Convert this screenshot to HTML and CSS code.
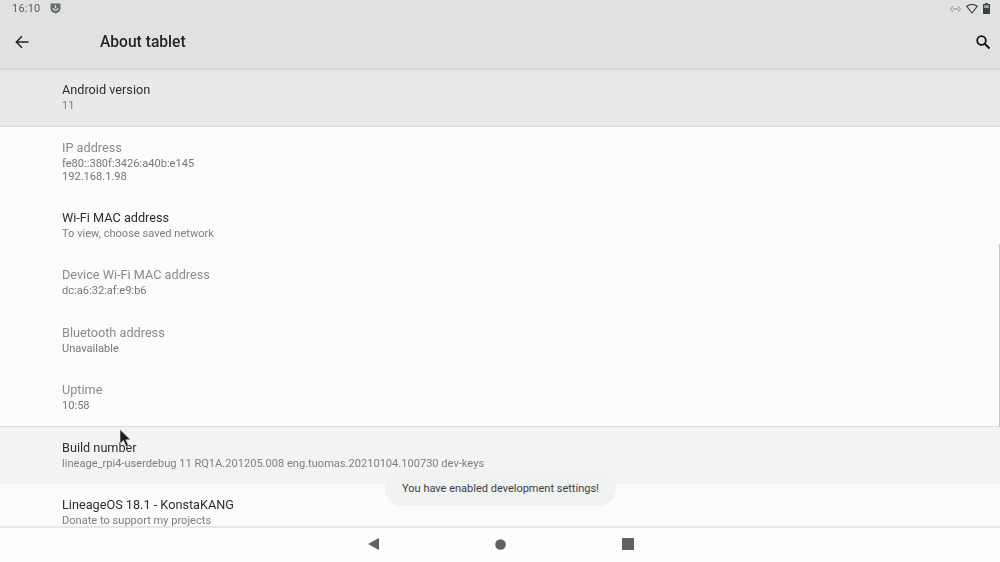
FILE: index.html
```html
<!DOCTYPE html>
<html lang="en">
  <head>
    <meta charset="UTF-8" />
    <meta name="viewport" content="width=device-width, initial-scale=1" />
    <title>About tablet</title>
    <link rel="stylesheet" href="styles.css">
  </head>
  <body>
    <div class="screen">
      <header class="top">
        <div class="status-bar">
          <div class="status-left">
            <span class="clock">16:10</span>
            <svg class="shield" width="11" height="11" viewBox="0 0 11 11">
              <path d="M0.500 0.500h10v5.200c0 2.500-2.400 4-5 4.800-2.600-0.800-5-2.300-5-4.800z" fill="#6a6d6d" />
              <path d="M3 5c0.300 3 4.700 3 5 0" fill="none" stroke="#dfe1e0" stroke-width="1.100" />
              <rect x="4.900" y="2" width="1.200" height="3.400" fill="#dfe1e0" />
            </svg>
          </div>
          <div class="status-right">
            <svg width="11" height="8" viewBox="0 0 11 8">
              <path d="M3 1L0.600 4 3 7M8 1l2.400 3L8 7M3 4h5" fill="none" stroke="#8a8d8d" stroke-width="1" />
            </svg>
            <svg width="12" height="10" viewBox="0 0 12 10">
              <path d="M0.800 2.300C3.800-0.100 8.200-0.100 11.200 2.300L6 9z" fill="none" stroke="#3d4040" stroke-width="1.100" stroke-linejoin="round" />
            </svg>
            <svg width="7" height="11" viewBox="0 0 7 11">
              <path d="M2.200 0h2.600v1H7v10H0V1h2.200z" fill="#3f4242" />
              <rect x="1.200" y="2.200" width="4.600" height="2.800" fill="#a9abab" />
            </svg>
          </div>
        </div>
        <div class="app-bar">
          <svg class="back" width="14" height="14" viewBox="0 0 14 14">
            <path d="M13.500 7H1.500M7 1.300L1.300 7 7 12.700" fill="none" stroke="#202222" stroke-width="1.500" />
          </svg>
          <h1>About tablet</h1>
          <svg class="search" width="14" height="14" viewBox="0 0 14 14">
            <circle cx="5.500" cy="5.500" r="4.300" fill="none" stroke="#111313" stroke-width="1.800" />
            <path d="M8.700 8.700L13.500 13.500" stroke="#111313" stroke-width="2" />
          </svg>
        </div>
      </header>

      <main class="list">
        <div class="row row-hl row-first">
          <div class="row-title">Android version</div>
          <div class="row-sub">11</div>
        </div>
        <div class="row row-tall row-off">
          <div class="row-title">IP address</div>
          <div class="row-sub">fe80::380f:3426:a40b:e145<br>192.168.1.98</div>
        </div>
        <div class="row">
          <div class="row-title">Wi-Fi MAC address</div>
          <div class="row-sub">To view, choose saved network</div>
        </div>
        <div class="row row-off">
          <div class="row-title">Device Wi-Fi MAC address</div>
          <div class="row-sub">dc:a6:32:af:e9:b6</div>
        </div>
        <div class="row row-off">
          <div class="row-title">Bluetooth address</div>
          <div class="row-sub">Unavailable</div>
        </div>
        <div class="row row-off">
          <div class="row-title">Uptime</div>
          <div class="row-sub">10:58</div>
        </div>
        <div class="row row-soft">
          <div class="row-title">Build number</div>
          <div class="row-sub">lineage_rpi4-userdebug 11 RQ1A.201205.008 eng.tuomas.20210104.100730 dev-keys</div>
        </div>
        <div class="row">
          <div class="row-title">LineageOS 18.1 - KonstaKANG</div>
          <div class="row-sub">Donate to support my projects</div>
        </div>
        <div class="scroll-thumb"></div>
        <div class="toast">You have enabled development settings!</div>
      </main>

      <nav class="nav-bar">
        <svg width="11" height="12" viewBox="0 0 11 12"><path d="M11 0v12L0 6z" fill="#5f6262" /></svg>
        <svg width="11" height="11" viewBox="0 0 11 11"><circle cx="5.500" cy="5.500" r="5.300" fill="#5f6262" /></svg>
        <svg width="12" height="12" viewBox="0 0 12 12"><rect width="12" height="12" rx="0.500" fill="#5f6262" /></svg>
      </nav>

      <svg class="cursor" width="13" height="19" viewBox="0 0 13 19">
        <path d="M1 0.500v14l3.500-3 2.500 6 2.400-1-2.500-5.700h4.600z" fill="#1c1e1e" stroke="#e8e8e8" stroke-width="0.600" />
      </svg>
    </div>
  </body>
</html>
```

FILE: styles.css
```css
* {
  margin: 0;
  padding: 0;
  box-sizing: border-box;
}

body {
  font-family: Roboto, "Liberation Sans", sans-serif;
  background-color: #fafbfa;
  overflow: hidden;
}

/* the reference is a video frame, so everything is a touch soft */
.screen {
  position: relative;
  width: 1000px;
  height: 562px;
  display: flex;
  flex-direction: column;
  overflow: hidden;
  filter: blur(0.35px);
}

/* Top bars */
.top {
  height: 69px;
  flex-shrink: 0;
  background: #e0e2e1;
  border-bottom: 1px solid #d3d5d4;
  box-shadow: 0 1px 2px rgba(0, 0, 0, 0.08);
  position: relative;
  z-index: 2;
}

.status-bar {
  height: 17px;
  display: flex;
  justify-content: space-between;
  align-items: center;
  padding: 0 10px 0 12px;
}

.status-left {
  display: flex;
  align-items: center;
  gap: 10px;
}

.clock {
  font-size: 11px;
  color: #5c5f5f;
  letter-spacing: 0.2px;
}

.status-right {
  display: flex;
  align-items: center;
  gap: 5px;
}

.app-bar {
  height: 51px;
  display: flex;
  align-items: center;
  padding: 0 10px 0 15px;
  margin-top: -1px;
}

.app-bar h1 {
  font-size: 15.600px;
  font-weight: 500;
  color: #222424;
  margin-left: 71px;
  flex: 1;
}

/* Settings rows */
.list {
  position: relative;
  flex: 1;
  overflow: hidden;
}

.row {
  height: 57.500px;
  padding: 13px 62px 0;
}

.row-first {
  height: 58px;
  border-bottom: 1px solid #d9dbda;
}

.row-hl {
  background: #e8e9e8;
}

.row-tall {
  height: 69.500px;
}

.row-soft {
  background: #f2f3f2;
  border-top: 1px solid #d9dbda;
  height: 58px;
  margin-top: -1px;
  padding-top: 13px;
}

.row-title {
  font-size: 12.700px;
  line-height: 15px;
  color: #2c2e2e;
}

.row-sub {
  font-size: 11.080px;
  line-height: 13px;
  margin-top: 2px;
  color: #7d8080;
}

.row-off .row-title {
  color: #8a8c8c;
}

.row-off .row-sub {
  color: #747777;
}

.scroll-thumb {
  position: absolute;
  right: 0;
  top: 175px;
  width: 1px;
  height: 182px;
  background: #c4c6c5;
}

.toast {
  position: absolute;
  left: 385px;
  top: 401px;
  width: 231px;
  height: 36px;
  border-radius: 18px;
  background: #f0f1f1;
  color: #3c3f3f;
  font-size: 11px;
  display: flex;
  align-items: center;
  justify-content: center;
}

/* Bottom nav */
.nav-bar {
  height: 36px;
  flex-shrink: 0;
  background: #fcfdfc;
  border-top: 2px solid #e6e7e6;
  display: flex;
  align-items: center;
  justify-content: center;
  gap: 116px;
  padding: 0 0 2px 2px;
  position: relative;
  z-index: 2;
}

.cursor {
  position: absolute;
  left: 119px;
  top: 429px;
  z-index: 3;
}
```
